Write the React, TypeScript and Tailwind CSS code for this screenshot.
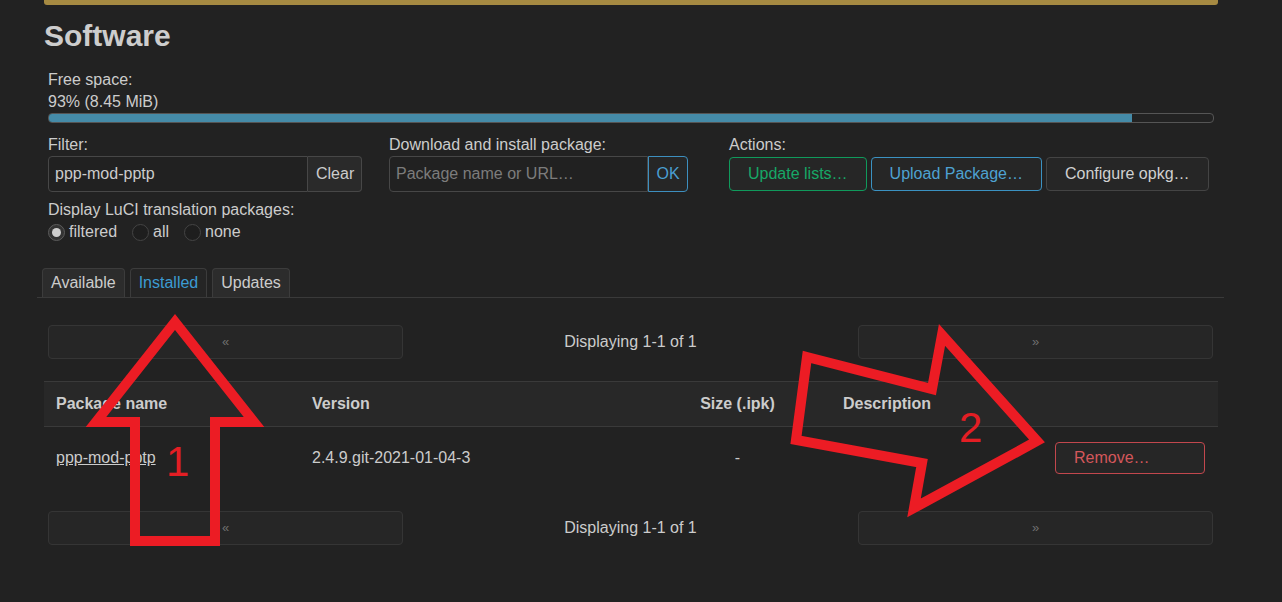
import React from "react";

const font = "font-['Liberation_Sans',Arial,sans-serif]";

function Radio({ checked, label }: { checked?: boolean; label: string }) {
  return (
    <div className="flex items-center mr-[15px]">
      <span
        className={
          "w-[17px] h-[17px] rounded-full border flex items-center justify-center mr-[4px] " +
          (checked ? "border-[#5c5c5c] bg-[#333]" : "border-[#444] bg-[#1e1e1e]")
        }
      >
        {checked && <span className="w-[9px] h-[9px] rounded-full bg-[#cfcfcf]" />}
      </span>
      <span>{label}</span>
    </div>
  );
}

function Pager() {
  return (
    <div className="flex h-[34px] items-center">
      <div className="ml-[4px] w-[355px] h-[34px] rounded-[4px] border border-[#353535] bg-[#262626] flex items-center justify-center text-[13px] text-[#6f6f6f]">
        «
      </div>
      <div className="flex-1 text-center">Displaying 1-1 of 1</div>
      <div className="mr-[5px] w-[355px] h-[34px] rounded-[4px] border border-[#353535] bg-[#262626] flex items-center justify-center text-[13px] text-[#6f6f6f]">
        »
      </div>
    </div>
  );
}

export default function App() {
  return (
    <div className={`relative w-[1282px] h-[602px] overflow-hidden bg-[#222222] text-[#cccccc] text-[16px] ${font}`}>
      <div className="ml-[44px] w-[1174px]">
        <div className="h-[5px] bg-[#a68a42] rounded-b-[3px]" />
        <h2 className="mt-[13px] text-[30px] font-bold leading-[36px] text-[#cdcdcd]">Software</h2>

        <div className="pl-[4px]">
          <div className="mt-[15px] leading-[22px]">Free space:</div>
          <div className="leading-[22px]">93% (8.45 MiB)</div>
          <div className="w-[1166px] h-[10px] border border-[#555] rounded-[4px] overflow-hidden bg-[#222]">
            <div className="h-full w-[93%] bg-[#458ba8]" />
          </div>

          <div className="mt-[11px] flex">
            <div className="w-[341px]">
              <div className="leading-[22px]">Filter:</div>
              <div className="flex h-[36px]">
                <div className="w-[260px] h-[36px] border border-[#474747] rounded-l-[4px] bg-[#212121] flex items-center pl-[6px]">
                  ppp-mod-pptp
                </div>
                <div className="w-[54px] h-[36px] border border-l-0 border-[#474747] rounded-r-[4px] bg-[#2a2a2a] flex items-center pl-[8px]">
                  Clear
                </div>
              </div>
            </div>
            <div className="w-[340px]">
              <div className="leading-[22px]">Download and install package:</div>
              <div className="flex h-[36px]">
                <div className="w-[259px] h-[36px] border border-[#474747] rounded-l-[4px] bg-[#212121] flex items-center pl-[6px] text-[#7c7c7c]">
                  Package name or URL…
                </div>
                <div className="w-[40px] h-[36px] border border-[#3d8fbf] rounded-r-[4px] bg-[#262626] flex items-center justify-center text-[#4a9fd2]">
                  OK
                </div>
              </div>
            </div>
            <div>
              <div className="leading-[22px]">Actions:</div>
              <div className="flex gap-[4px] mt-[1px]">
                <div className="h-[34px] px-[18px] border border-[#109a5c] rounded-[4px] bg-[#262626] flex items-center text-[#17a866]">
                  Update lists…
                </div>
                <div className="h-[34px] px-[18px] border border-[#3b92c2] rounded-[4px] bg-[#262626] flex items-center text-[#4ea2d2]">
                  Upload Package…
                </div>
                <div className="h-[34px] px-[18px] border border-[#444] rounded-[4px] bg-[#262626] flex items-center text-[#d0d0d0]">
                  Configure opkg…
                </div>
              </div>
            </div>
          </div>

          <div className="mt-[7px] leading-[22px]">Display LuCI translation packages:</div>
          <div className="flex items-center h-[22px]">
            <Radio checked label="filtered" />
            <Radio label="all" />
            <Radio label="none" />
          </div>
        </div>

        <div className="mt-[25px] ml-[-7px] w-[1187px] flex pl-[5px] border-b border-[#3a3a3a]">
          <div className="h-[29px] px-[8px] mr-[5px] border border-b-0 border-[#3c3c3c] rounded-t-[4px] bg-[#2c2c2c] leading-[28px]">
            Available
          </div>
          <div className="h-[29px] px-[8px] mr-[5px] border border-b-0 border-[#3c3c3c] rounded-t-[4px] bg-[#252525] leading-[28px] text-[#3c9bd3]">
            Installed
          </div>
          <div className="h-[29px] px-[8px] border border-b-0 border-[#3c3c3c] rounded-t-[4px] bg-[#2c2c2c] leading-[28px]">
            Updates
          </div>
        </div>

        <div className="mt-[27px]">
          <Pager />
        </div>

        <div className="mt-[22px]">
          <div className="flex h-[46px] items-center bg-[#282828] border-t border-b border-[#3a3a3a] font-bold">
            <div className="w-[256px] pl-[12px]">Package name</div>
            <div className="w-[388px] pl-[12px]">Version</div>
            <div className="w-[99px] text-center">Size (.ipk)</div>
            <div className="flex-1 pl-[56px]">Description</div>
          </div>
          <div className="flex h-[61px] items-center">
            <div className="w-[256px] pl-[12px]">
              <span className="underline">ppp-mod-pptp</span>
            </div>
            <div className="w-[388px] pl-[12px]">2.4.9.git-2021-01-04-3</div>
            <div className="w-[99px] text-center">-</div>
            <div className="flex-1 flex justify-end pr-[13px]">
              <div className="w-[150px] h-[32px] border border-[#c2474d] rounded-[4px] bg-[#262626] flex items-center pl-[18px] text-[#d4575b]">
                Remove…
              </div>
            </div>
          </div>
        </div>

        <div className="mt-[23px]">
          <Pager />
        </div>
      </div>

      <svg className="absolute left-0 top-0 pointer-events-none" width="1282" height="602" viewBox="0 0 1282 602">
        <polygon
          points="175,322 254,422 215,422 215,541 135,541 135,422 96,422"
          fill="none"
          stroke="#ec1c24"
          strokeWidth="10"
          strokeLinejoin="miter"
          strokeMiterlimit="10"
        />
        <polygon
          points="807,357 932,389 942,335 1037,441 914,508 922,463 796,440"
          fill="none"
          stroke="#ec1c24"
          strokeWidth="10"
          strokeLinejoin="miter"
          strokeMiterlimit="10"
        />
      </svg>
      <div className="absolute left-[166px] top-[441px] text-[42px] leading-none text-[#e31e24]">1</div>
      <div className="absolute left-[959px] top-[407px] text-[42px] leading-none text-[#e31e24]">2</div>
    </div>
  );
}
